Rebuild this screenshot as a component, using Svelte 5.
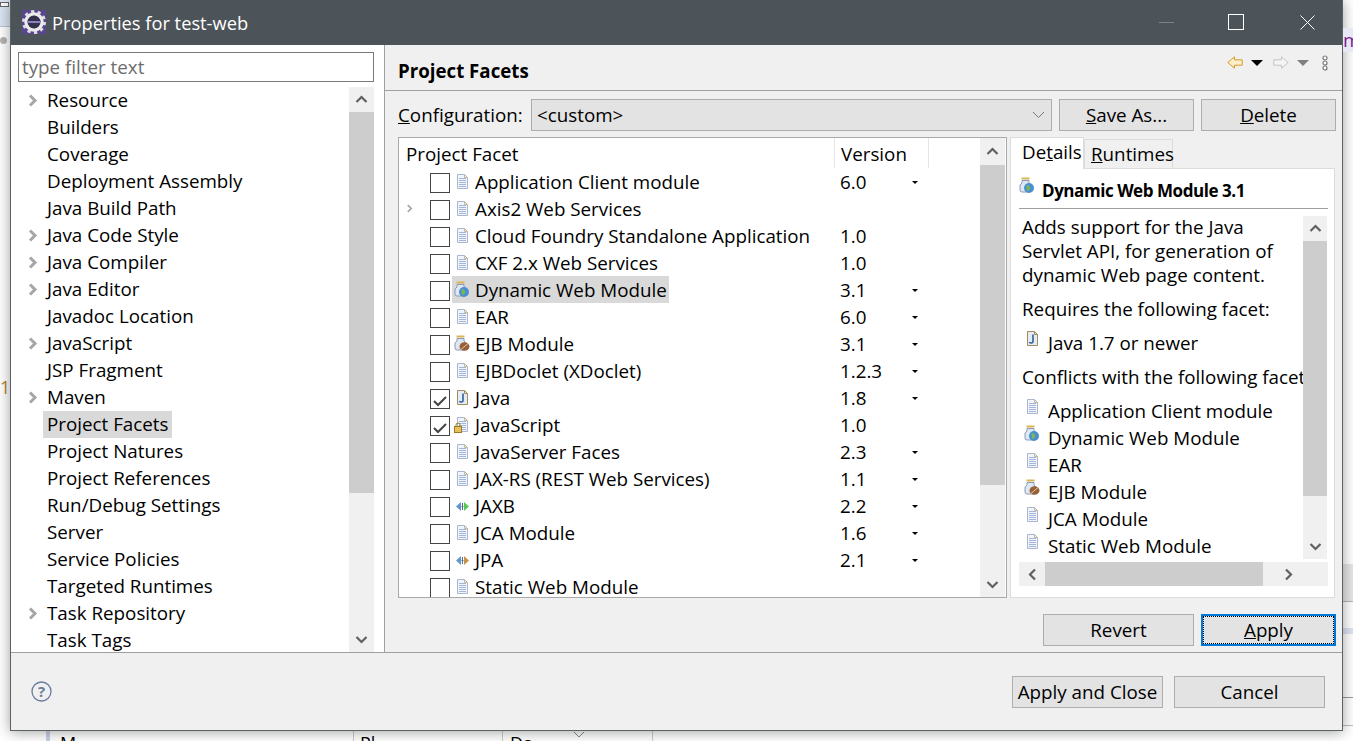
<script>
  const tree = [
    ['Resource', 1], ['Builders', 0], ['Coverage', 0], ['Deployment Assembly', 0], ['Java Build Path', 0],
    ['Java Code Style', 1], ['Java Compiler', 1], ['Java Editor', 1], ['Javadoc Location', 0], ['JavaScript', 1],
    ['JSP Fragment', 0], ['Maven', 1], ['Project Facets', 0], ['Project Natures', 0], ['Project References', 0],
    ['Run/Debug Settings', 0], ['Server', 0], ['Service Policies', 0], ['Targeted Runtimes', 0], ['Task Repository', 1], ['Task Tags', 0]
  ];
  const facets = [
    { n: 'Application Client module', v: '6.0', d: 1, i: 'doc' },
    { n: 'Axis2 Web Services', v: '', d: 0, i: 'doc', exp: 1 },
    { n: 'Cloud Foundry Standalone Application', v: '1.0', d: 0, i: 'doc' },
    { n: 'CXF 2.x Web Services', v: '1.0', d: 0, i: 'doc' },
    { n: 'Dynamic Web Module', v: '3.1', d: 1, i: 'web', sel: 1 },
    { n: 'EAR', v: '6.0', d: 1, i: 'doc' },
    { n: 'EJB Module', v: '3.1', d: 1, i: 'ejb' },
    { n: 'EJBDoclet (XDoclet)', v: '1.2.3', d: 1, i: 'doc' },
    { n: 'Java', v: '1.8', d: 1, i: 'java', c: 1 },
    { n: 'JavaScript', v: '1.0', d: 0, i: 'lock', c: 1 },
    { n: 'JavaServer Faces', v: '2.3', d: 1, i: 'doc' },
    { n: 'JAX-RS (REST Web Services)', v: '1.1', d: 1, i: 'doc' },
    { n: 'JAXB', v: '2.2', d: 1, i: 'jaxb' },
    { n: 'JCA Module', v: '1.6', d: 1, i: 'doc' },
    { n: 'JPA', v: '2.1', d: 1, i: 'jpa' },
    { n: 'Static Web Module', v: '', d: 0, i: 'doc' }
  ];
  const conflicts = [
    ['Application Client module', 'doc'], ['Dynamic Web Module', 'web'], ['EAR', 'doc'],
    ['EJB Module', 'ejb'], ['JCA Module', 'doc'], ['Static Web Module', 'doc']
  ];
</script>

{#snippet chevron(dir)}
  <svg class="chev" width="13" height="13" viewBox="0 0 13 13">
    {#if dir === 'up'}<path d="M1.500 9 6.500 4l5 5" />
    {:else if dir === 'down'}<path d="M1.500 4l5 5 5-5" />
    {:else if dir === 'left'}<path d="M9 1.500 4 6.500l5 5" />
    {:else}<path d="M4 1.500l5 5-5 5" />{/if}
  </svg>
{/snippet}

{#snippet icon(k)}
  <svg class="ic" width="18" height="18" viewBox="0 0 18 18">
    {#if k === 'doc' || k === 'lock' || k === 'java'}
      <path d="M5.500 1.500h7l3 3v11h-10z" fill={k === 'java' ? '#e6ecf6' : '#f1f4fa'} stroke={k === 'java' ? '#a08c5c' : '#a9b6cf'} />
      <path d="M12.500 1.500v3h3" fill="none" stroke={k === 'java' ? '#a08c5c' : '#c8b98c'} />
      {#if k === 'java'}
        <path d="M11 4.500v7c0 2-3 2-3.500.5" fill="none" stroke="#2f5f9e" stroke-width="1.600" />
      {:else}
        <path d="M7 5.500h7M7 7.500h7M7 9.500h7M7 11.500h7M7 13.500h7" stroke="#a3b5d8" />
      {/if}
      {#if k === 'lock'}
        <rect x="2.500" y="10.500" width="7" height="6" fill="#e8c15a" stroke="#9c7a24" />
        <path d="M4 10.500V9a2 2 0 0 1 4 0v1.500" fill="none" stroke="#9c7a24" />
      {/if}
    {:else if k === 'web' || k === 'ejb'}
      <path d="M4.500 1.500h8" stroke="#d8b45a" stroke-width="2" />
      <path d="M5 3.500h7v2.500l2 2v5a2 2 0 0 1-2 2H5a2 2 0 0 1-2-2V8l2-2z" fill="#dfe7f2" stroke="#8a9bb5" />
      {#if k === 'web'}
        <circle cx="12" cy="11" r="5" fill="#4a90d0" />
        <path d="M9.500 8.500c2-.500 3 .500 3.500 2s-1.500 4-3 3z" fill="#7cb84a" />
      {:else}
        <ellipse cx="12.500" cy="11.500" rx="5" ry="4.300" fill="#96603a" />
        <path d="M9 14.500l7-6" stroke="#e4c49c" />
      {/if}
    {:else}
      <path d="M9 5 4 9.500 9 14z" fill="#5f96cc" />
      <path d="M12 5l5 4.500-5 4.500z" fill={k === 'jaxb' ? '#58c65a' : '#c8924a'} />
      <path d="M9.500 9.500h2M10.500 6v7" stroke="#5a6d80" fill="none" />
    {/if}
  </svg>
{/snippet}

<div class="desk">
  <div class="strip-top"><span class="mini"></span></div>
  <span class="blob"></span>
  <span class="one">1</span>
  <span class="rs r1"></span><span class="rs r2"></span><span class="rs r3"></span><span class="rs r4"></span><span class="rs r5"></span>
  <div class="bottom-cols">
    <span class="c1">M</span><span class="c2">Pl</span><span class="c3">Da</span>
    <svg class="csort" width="12" height="7" viewBox="0 0 12 7"><path d="M1 1l5 5 5-5" fill="none" stroke="#888" /></svg>
    <span class="c4"></span>
  </div>

  <div class="win">
    <header class="title">
      <svg class="logo" width="24" height="24" viewBox="0 0 24 24">
        <rect width="24" height="24" fill="#5a4690" />
        <circle cx="12" cy="12" r="8" fill="none" stroke="#ececec" stroke-width="3.500" />
        <circle cx="12" cy="12" r="10.500" fill="none" stroke="#e0e0e0" stroke-width="3" stroke-dasharray="3.200 3.400" />
        <circle cx="12" cy="12" r="6.500" fill="#34324a" />
        <path d="M6 12h12" stroke="#8a7fc0" stroke-width="2" />
      </svg>
      <span class="tt">Properties for test-web</span>
      <div class="wc">
        <span class="min"></span>
        <span class="max"></span>
        <svg width="15" height="15" viewBox="0 0 15 15"><path d="M.500.500l14 14M14.500.500l-14 14" stroke="#fff" fill="none" /></svg>
      </div>
    </header>

    <div class="main">
      <aside class="left">
        <div class="filter">type filter text</div>
        <div class="treewrap">
          <ul class="tree">
            {#each tree as [n, e]}
              <li>
                <span class="tw">{#if e}{@render chevron('right')}{/if}</span>
                <span class="tl" class:cur={n === 'Project Facets'}>{n}</span>
              </li>
            {/each}
          </ul>
          <div class="vbar tall">
            <span class="arrow">{@render chevron('up')}</span>
            <span class="thumb t1"></span>
            <span class="grow"></span>
            <span class="arrow">{@render chevron('down')}</span>
          </div>
        </div>
      </aside>

      <section class="right">
        <div class="head">
          <h1>Project Facets</h1>
          <div class="tools">
            <svg class="back" width="16" height="13" viewBox="0 0 16 13"><path d="M.800 6.500l6.700-5.700v3h7.700v5.400H7.500v3z" fill="#fbeec8" stroke="#d69a28" /></svg>
            <span class="tri k"></span>
            <svg class="fwd" width="16" height="13" viewBox="0 0 16 13"><path d="M15.200 6.500 8.500.800v3H.800v5.400h7.700v3z" fill="#f4f4f4" stroke="#c4c4c4" /></svg>
            <span class="tri g"></span>
            <svg class="more" width="8" height="16" viewBox="0 0 8 16"><g fill="#fff" stroke="#777" stroke-width="1.200"><circle cx="4" cy="3" r="2" /><circle cx="4" cy="8" r="2" /><circle cx="4" cy="13" r="2" /></g></svg>
          </div>
        </div>

        <div class="body">
          <div class="config">
            <span class="clabel"><u>C</u>onfiguration:</span>
            <div class="select"><span>&lt;custom&gt;</span>
              <svg width="13" height="8" viewBox="0 0 13 8"><path d="M1 1l5.500 5.500L12 1" fill="none" stroke="#777" /></svg>
            </div>
            <div class="btn b135"><u>S</u>ave As...</div>
            <div class="btn b135"><u>D</u>elete</div>
          </div>

          <div class="split">
            <div class="table">
              <div class="tablemain">
                <div class="thead">
                  <span class="h1">Project Facet</span>
                  <span class="h2">Version</span>
                </div>
                <div class="rows">
                  {#each facets as f}
                    <div class="row">
                      <span class="exp">{#if f.exp}{@render chevron('right')}{/if}</span>
                      <span class="cb">{#if f.c}<svg width="18" height="18" viewBox="0 0 18 18"><path d="M3 9l4 4 8-8" fill="none" stroke="#444" stroke-width="2" /></svg>{/if}</span>
                      <span class="nm" class:sel={f.sel}>{@render icon(f.i)}<span>{f.n}</span></span>
                      <span class="ver">{f.v}</span>
                      {#if f.d}<span class="dd"></span>{/if}
                    </div>
                  {/each}
                </div>
              </div>
              <div class="vbar">
                <span class="arrow a27">{@render chevron('up')}</span>
                <span class="thumb t2"></span>
                <span class="grow"></span>
                <span class="arrow a25">{@render chevron('down')}</span>
              </div>
            </div>

            <div class="detail">
              <div class="tabs">
                <span class="tab on">De<u>t</u>ails</span>
                <span class="tab off"><u>R</u>untimes</span>
              </div>
              <div class="panel">
                <div class="ptitle">{@render icon('web')}<b>Dynamic Web Module 3.1</b></div>
                <div class="pscroll">
                  <div class="pcontent">
                    <div class="ptext">
                      <p class="desc">Adds support for the Java<br />Servlet API, for generation of<br />dynamic Web page content.</p>
                      <p class="l1">Requires the following facet:</p>
                      <div class="li l2">{@render icon('java')}<span>Java 1.7 or newer</span></div>
                      <p class="l3">Conflicts with the following facet</p>
                      {#each conflicts as [n, i]}
                        <div class="li">{@render icon(i)}<span>{n}</span></div>
                      {/each}
                    </div>
                    <div class="vbar small">
                      <span class="arrow a25">{@render chevron('up')}</span>
                      <span class="thumb t3"></span>
                      <span class="grow"></span>
                      <span class="arrow a25">{@render chevron('down')}</span>
                    </div>
                  </div>
                  <div class="hbar">
                    <span class="harrow">{@render chevron('left')}</span>
                    <span class="hthumb"></span>
                    <span class="harrow">{@render chevron('right')}</span>
                  </div>
                </div>
              </div>
            </div>
          </div>

          <div class="actions">
            <div class="btn b151">Revert</div>
            <div class="btn b135 focus"><span class="dots"><u>A</u>pply</span></div>
          </div>
        </div>
      </section>
    </div>

    <footer class="foot">
      <svg class="help" width="21" height="21" viewBox="0 0 21 21">
        <circle cx="10.500" cy="10.500" r="9.500" fill="none" stroke="#6a7c9c" stroke-width="1.300" />
        <text x="10.500" y="16" text-anchor="middle" class="q">?</text>
      </svg>
      <div class="fbtns">
        <div class="btn b151">Apply and Close</div>
        <div class="btn b151">Cancel</div>
      </div>
    </footer>
  </div>
  <div class="purple">m</div>
</div>

<style>
  :global(body) { margin: 0; background: #fff; }
  .desk {
    position: relative; width: 1353px; height: 741px; overflow: hidden; background: #fff;
    font-family: "Open Sans", "Noto Sans", sans-serif; font-size: 18.8px; color: #000;
  }
  .strip-top { position: absolute; left: 0; top: 0; width: 11px; height: 26px; background: #dbe6f3; border-bottom: 1px solid #b8c4d4; }
  .mini { position: absolute; left: 0; top: 2px; width: 7px; height: 3px; background: #fff; border: 1px solid #666; }
  .blob { position: absolute; left: 0; top: 37px; width: 7px; height: 7px; border-radius: 50%; background: #b4b4b4; }
  .one { position: absolute; left: 0; top: 375px; color: #b5822c; font-size: 18px; line-height: 24px; }
  .purple { position: absolute; left: 1343px; top: 28px; width: 10px; height: 24px; background: #e6e8f6; color: #7a1a90; font-size: 19px; line-height: 24px; overflow: hidden; }
  .rs { position: absolute; left: 1343px; width: 10px; }
  .r1 { top: 564px; height: 37px; background: #e6e6e6; }
  .r2 { top: 601px; height: 1px; background: #b4b4b4; }
  .r3 { top: 628px; height: 6px; background: #dfe3f3; }
  .r4 { top: 697px; height: 1px; background: #999; }
  .r5 { top: 725px; height: 1px; background: #bbb; }
  .bottom-cols { position: absolute; left: 46px; top: 731px; width: 607px; height: 10px; overflow: hidden; border-left: 4px solid #c8d0e8; background: #fff; line-height: 26px; font-size: 18px; }
  .bottom-cols span { position: absolute; top: -1px; height: 12px; }
  .c1 { left: 10px; }
  .c2 { left: 303px; border-left: 1px solid #ccc; padding-left: 6px; }
  .c3 { left: 452px; border-left: 1px solid #ccc; padding-left: 7px; }
  .c4 { left: 602px; border-left: 1px solid #ccc; }
  .csort { position: absolute; left: 523px; top: 0; }

  .win {
    position: absolute; left: 10px; top: 0; width: 1331px; height: 730px;
    border: 1px solid #5a6266; border-top: 0; background: #f0f0f0;
    box-shadow: 0 1px 13px rgba(0,0,0,.38);
    display: flex; flex-direction: column;
  }
  .title { height: 45px; flex: none; background: #4c5359; color: #fff; display: flex; align-items: center; padding-left: 11px; padding-bottom: 1px; box-sizing: border-box; font-size: 18.300px; }
  .logo { flex: none; }
  .tt { margin-left: 6px; }
  .wc { margin-left: auto; display: flex; align-items: center; }
  .min { width: 15px; height: 1px; background: #7c8287; margin-right: 54px; }
  .max { width: 14px; height: 14px; border: 1px solid #fff; margin-right: 56px; }
  .wc svg { margin-right: 27px; }

  .main { flex: 1; display: flex; min-height: 0; }
  .left { width: 374px; flex: none; background: #fff; border-right: 1px solid #a0a0a0; padding: 7px 0 0 7px; box-sizing: border-box; display: flex; flex-direction: column; }
  .filter { width: 356px; height: 30px; box-sizing: border-box; border: 1px solid #7a7a7a; color: #6d6d6d; line-height: 28px; padding-left: 3px; flex: none; }
  .treewrap { display: flex; flex: 1; margin-top: 5px; min-height: 0; width: 356px; }
  .tree { list-style: none; margin: 0; padding: 0; width: 331px; overflow: hidden; }
  .tree li { height: 27px; display: flex; align-items: center; white-space: nowrap; }
  .tw { width: 25px; flex: none; padding-left: 8px; box-sizing: border-box; display: flex; }
  .tl { padding: 0 4px; height: 27px; line-height: 26px; }
  .tl.cur { background: #d9d9d9; }
  .chev { display: block; }
  .chev path { fill: none; stroke: #606060; stroke-width: 2.200; }
  .tw :global(.chev path) { stroke: #a6a6a6; stroke-width: 3; }
  .exp :global(.chev path) { stroke: #a6a6a6; stroke-width: 2.500; }

  .vbar { width: 25px; flex: none; background: #f0f0f0; display: flex; flex-direction: column; }
  .arrow { height: 25px; flex: none; display: flex; align-items: center; justify-content: center; }
  .a27 { height: 27px; }
  .a25 { height: 25px; }
  .thumb { flex: none; background: #cdcdcd; }
  .t1 { height: 381px; }
  .t2 { height: 320px; }
  .t3 { height: 255px; }
  .grow { flex: 1; }

  .right { flex: 1; min-width: 0; display: flex; flex-direction: column; }
  .head { height: 46px; flex: none; box-sizing: border-box; border-bottom: 1px solid #a0a0a0; padding: 0 13px 0 13px; display: flex; justify-content: space-between; position: relative; }
  h1 { margin: 0; font-size: 18.700px; font-weight: 700; line-height: 52px; }
  .tools { display: flex; align-items: center; height: 35px; }
  .tri { width: 0; height: 0; border-left: 6px solid transparent; border-right: 6px solid transparent; border-top: 6px solid; }
  .tri.k { border-top-color: #000; margin-left: 8px; }
  .tri.g { border-top-color: #808080; margin-left: 8px; }
  .fwd { margin-left: 10px; }
  .more { margin-left: 12px; }
  .body { flex: 1; padding: 8px 6px 0 13px; display: flex; flex-direction: column; min-height: 0; }

  .config { display: flex; align-items: center; height: 32px; flex: none; }
  .clabel { width: 133px; flex: none; white-space: nowrap; }
  .select { width: 521px; height: 32px; box-sizing: border-box; border: 1px solid #adadad; background: #e3e3e3; display: flex; align-items: center; justify-content: space-between; padding: 0 6px 0 5px; flex: none; margin-right: 7px; }
  .btn { height: 32px; box-sizing: border-box; border: 1px solid #adadad; background: #e3e3e3; display: flex; align-items: center; justify-content: center; flex: none; white-space: nowrap; }
  .b135 { width: 135px; }
  .b135 + .b135 { margin-left: 7px; }
  .b151 { width: 151px; }

  .split { display: flex; margin-top: 6px; height: 461px; flex: none; }
  .table { width: 609px; height: 461px; box-sizing: border-box; border: 1px solid #a9a9a9; background: #fff; display: flex; flex: none; }
  .tablemain { width: 581px; flex: none; overflow: hidden; }
  .thead { height: 30px; display: flex; position: relative; line-height: 32px; }
  .h1 { width: 436px; padding-left: 7px; box-sizing: border-box; border-right: 1px solid #e5e5e5; height: 30px; }
  .h2 { width: 94px; padding-left: 6px; box-sizing: border-box; border-right: 1px solid #e5e5e5; height: 30px; }
  .rows { height: 429px; overflow: hidden; }
  .row { height: 27px; display: flex; align-items: center; position: relative; white-space: nowrap; }
  .exp { width: 31px; flex: none; padding-left: 6px; box-sizing: border-box; display: flex; }
  .exp :global(.chev) { width: 9px; height: 9px; }
  .cb { width: 18px; height: 18px; flex: none; border: 1px solid #444; background: #fff; display: block; margin-top: 2px; }
  .nm { display: flex; align-items: center; height: 27px; margin-left: 2px; padding-right: 2px; }
  .nm.sel { background: #d9d9d9; }
  .nm :global(.ic) { margin-right: 5px; }
  .ver { position: absolute; left: 441px; }
  .dd { position: absolute; left: 513px; top: 13px; width: 0; height: 0; border-left: 3px solid transparent; border-right: 3px solid transparent; border-top: 3px solid #000; }

  .detail { margin-left: 3px; width: 325px; flex: none; display: flex; flex-direction: column; }
  .tabs { display: flex; align-items: flex-end; height: 31px; flex: none; position: relative; z-index: 1; }
  .tab { box-sizing: border-box; display: block; white-space: nowrap; }
  .tab.on { width: 74px; height: 32px; background: #fff; border: 1px solid #dcdcdc; border-bottom: 0; line-height: 28px; margin-bottom: -1px; padding-left: 11px; }
  .tab.off { width: 89px; height: 29px; background: #f0f0f0; border: 1px solid #dcdcdc; border-bottom: 0; line-height: 28px; padding-left: 6px; }
  .panel { height: 430px; box-sizing: border-box; border: 1px solid #dcdcdc; background: #fff; padding: 0 6px 11px 8px; display: flex; flex-direction: column; }
  .ptitle { height: 40px; flex: none; box-sizing: border-box; border-bottom: 1px solid #a0a0a0; display: flex; align-items: center; font-size: 17px; letter-spacing: -.45px; padding-top: 3px; white-space: nowrap; }
  .ptitle :global(.ic) { margin: -9px 7px 0 -2px; }
  .pscroll { margin-top: 7px; flex: 1; display: flex; flex-direction: column; min-height: 0; }
  .pcontent { flex: 1; display: flex; min-height: 0; }
  .ptext { width: 284px; flex: none; overflow: hidden; white-space: nowrap; padding-left: 3px; box-sizing: border-box; }
  .ptext p { margin: 0; }
  .desc { line-height: 24px; margin-top: -1px !important; }
  .l1 { margin-top: 10px !important; line-height: 24px; }
  .l3 { line-height: 24px; margin-bottom: 8px !important; }
  .li { height: 27px; display: flex; align-items: center; }
  .li :global(.ic) { margin: -8px 8px 0 0; }
  .l2 { margin: 8px 0 9px; }
  .vbar.small { width: 24px; }
  .hbar { height: 24px; flex: none; background: #f0f0f0; display: flex; margin-top: 3px; }
  .harrow { width: 26px; flex: none; display: flex; align-items: center; justify-content: center; }
  .harrow:last-child { width: 65px; padding-right: 15px; box-sizing: border-box; }
  .hthumb { width: 218px; flex: none; background: #cdcdcd; }

  .actions { display: flex; justify-content: flex-end; margin-top: 16px; gap: 7px; flex: none; }
  .actions .btn + .btn { margin-left: 0; }
  .focus { border: 2px solid #0078d7; }
  .dots { outline: 1px dotted #000; width: 129px; height: 26px; display: flex; align-items: center; justify-content: center; }

  .foot { height: 78px; flex: none; box-sizing: border-box; border-top: 1px solid #a0a0a0; display: flex; align-items: center; justify-content: space-between; padding: 0 17px 0 20px; position: relative; }
  .help { display: block; }
  .q { font-size: 15px; font-weight: 700; fill: #6a7c9c; }
  .fbtns { display: flex; gap: 11px; }
</style>
